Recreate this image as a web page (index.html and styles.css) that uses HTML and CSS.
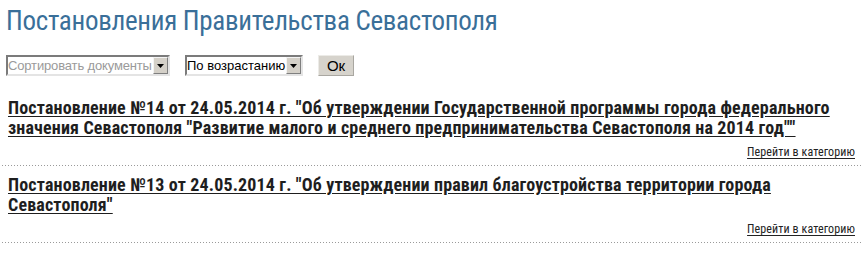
FILE: index.html
```html
<!DOCTYPE html>
<html lang="ru">
<head>
<meta charset="utf-8">
<title>Постановления Правительства Севастополя</title>
<link rel="stylesheet" href="styles.css">
</head>
<body>
<div class="page">
  <h1 class="page-title">Постановления Правительства Севастополя</h1>
  <form class="sort-form">
    <div class="fake-select sel-field">
      <span class="sel-text placeholder">Сортировать документы</span>
      <span class="sel-arrow"><svg width="7" height="4" viewBox="0 0 7 4"><path d="M0 0H7L3.5 4Z" fill="#000"/></svg></span>
    </div>
    <div class="fake-select sel-order">
      <span class="sel-text">По возрастанию</span>
      <span class="sel-arrow"><svg width="7" height="4" viewBox="0 0 7 4"><path d="M0 0H7L3.5 4Z" fill="#000"/></svg></span>
    </div>
    <button type="button" class="ok-btn">Ок</button>
  </form>
  <div class="doc-list">
    <div class="doc-item">
      <a class="doc-title" href="#">Постановление №14 от 24.05.2014 г. "Об утверждении Государственной программы города федерального значения Севастополя "Развитие малого и среднего предпринимательства Севастополя на 2014 год""</a>
      <div class="doc-more"><a href="#">Перейти в категорию</a></div>
    </div>
    <div class="doc-item">
      <a class="doc-title" href="#">Постановление №13 от 24.05.2014 г. "Об утверждении правил благоустройства территории города Севастополя"</a>
      <div class="doc-more"><a href="#">Перейти в категорию</a></div>
    </div>
  </div>
</div>
</body>
</html>
```
FILE: styles.css
```css
html, body {
  margin: 0;
  padding: 0;
  background: #fff;
}
.page {
  padding: 0 2px 0 2px;
  font-family: Roboto, "Liberation Sans", sans-serif;
}
.page-title {
  margin: 4px 0 0 4px;
  font-family: Roboto, sans-serif;
  font-stretch: condensed;
  font-weight: 400;
  font-size: 27px;
  letter-spacing: -0.3px;
  line-height: 34px;
  color: #3a6f99;
}
.sort-form {
  display: flex;
  align-items: center;
  gap: 15px;
  margin: 17px 0 0 4px;
  height: 21px;
}
.fake-select {
  box-sizing: border-box;
  height: 21px;
  display: flex;
  align-items: center;
  border: 2px solid;
  border-color: #7b7b7b #e4e4e4 #e4e4e4 #7b7b7b;
  background: #fff;
  font-family: "Liberation Sans", Arial, sans-serif;
  font-size: 13px;
  color: #000;
}
.sel-field { width: 164px; }
.sel-order { width: 118px; }
.sel-text {
  flex: 1;
  padding-left: 0;
  white-space: nowrap;
  overflow: hidden;
  line-height: 17px;
}
.placeholder {
  color: #9a9a9a;
  letter-spacing: -0.15px;
}
.sel-arrow {
  box-sizing: border-box;
  flex: none;
  width: 15px;
  height: 17px;
  display: flex;
  align-items: center;
  justify-content: center;
  background: #d4d0c8;
  border: 1px solid;
  border-color: #f4f4f4 #7f7f7f #7f7f7f #f4f4f4;
}
.ok-btn {
  box-sizing: border-box;
  width: 36px;
  height: 21px;
  padding: 0;
  background: #d6d3cc;
  border: 1px solid;
  border-color: #ecebe7 #a9a7a1 #a9a7a1 #ecebe7;
  font-family: "Liberation Sans", Arial, sans-serif;
  font-size: 15px;
  color: #000;
}
.doc-list {
  margin-top: 14px;
}
.doc-item {
  padding: 8px 7px 6px 6px;
  background-image: linear-gradient(to right, #9a9a9a 1px, transparent 1px);
  background-size: 3px 1px;
  background-repeat: repeat-x;
  background-position: 0 100%;
}
.doc-item + .doc-item {
  padding-top: 9px;
}
.doc-title {
  display: inline;
  font-family: Roboto, sans-serif;
  font-stretch: condensed;
  font-weight: 700;
  font-size: 18px;
  letter-spacing: 0.15px;
  line-height: 19px;
  color: #1e1e1e;
  text-decoration: underline;
  text-underline-offset: 2px;
}
.doc-more {
  margin-top: 6px;
  text-align: right;
  line-height: 16px;
  font-size: 12px;
  letter-spacing: 0.1px;
  font-stretch: condensed;
}
.doc-more a {
  color: #222;
  text-decoration: underline;
  text-underline-offset: 2px;
}
```
